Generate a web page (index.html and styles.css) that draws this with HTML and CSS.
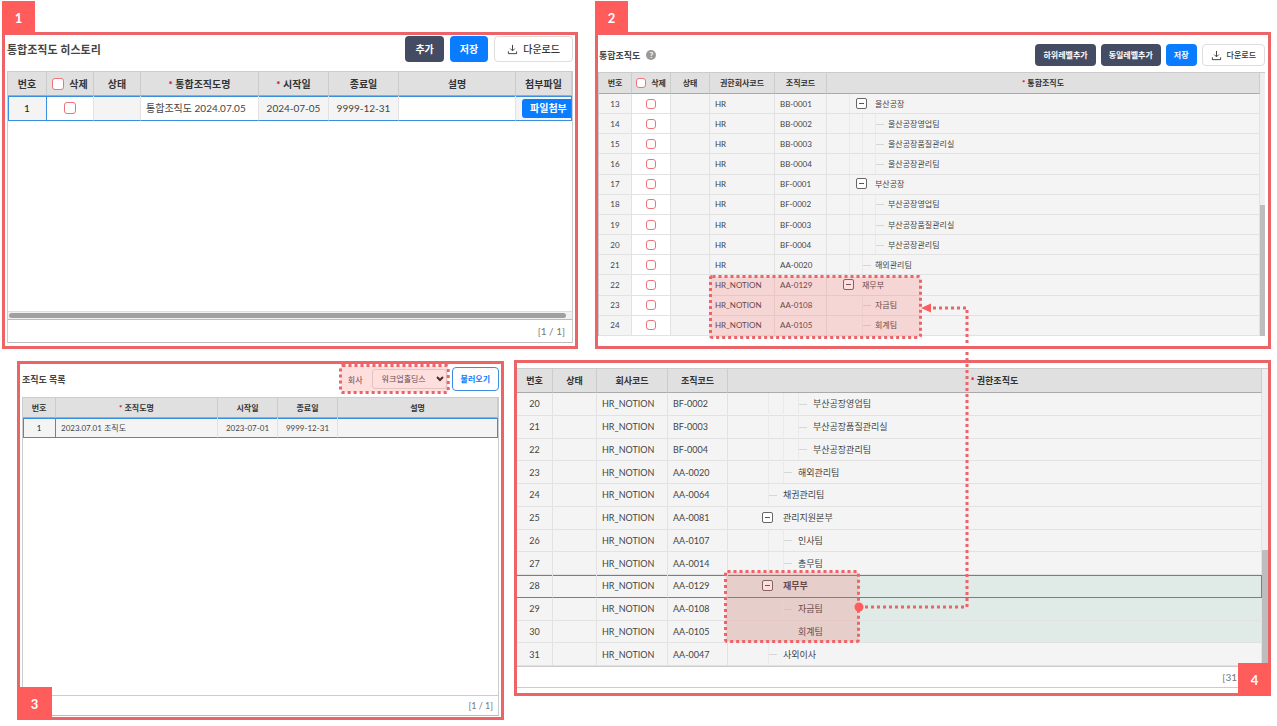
FILE: index.html
```html
<!DOCTYPE html>
<html lang="ko">
<head>
    <meta charset="UTF-8">
    <meta name="viewport" content="width=device-width, initial-scale=1.0">
    <title>통합조직도</title>
    <link rel="stylesheet" href="styles.css">
</head>
<body>

<main class="board">
    <div class="board-row top-row">

        <!-- 1. history -->
        <section class="panel panel-history">
            <span class="badge badge-top">1</span>
            <div class="toolbar">
                <h2>통합조직도 히스토리</h2>
                <div class="buttons">
                    <button type="button" class="btn dark">추가</button>
                    <button type="button" class="btn blue">저장</button>
                    <button type="button" class="btn line">
                        <svg class="icon" viewBox="0 0 12 12"><path d="M6 1v6M3.500 5L6 7.500L8.500 5M1.500 8v2.500h9V8"/></svg>
                        다운로드
                    </button>
                </div>
            </div>
            <div class="grid">
                <table>
                    <colgroup><col class="h1"><col class="h2"><col class="h2"><col class="h3"><col class="h4"><col class="h4"><col><col class="h5"></colgroup>
                    <thead>
                        <tr>
                            <th>번호</th>
                            <th><label class="check-all"><input type="checkbox">삭제</label></th>
                            <th>상태</th>
                            <th class="required">통합조직도명</th>
                            <th class="required">시작일</th>
                            <th>종료일</th>
                            <th>설명</th>
                            <th>첨부파일</th>
                        </tr>
                    </thead>
                    <tbody>
                        <tr class="selected">
                            <td class="num">1</td>
                            <td class="edit center"><input type="checkbox" aria-label="1 삭제"></td>
                            <td></td>
                            <td class="edit">통합조직도 2024.07.05</td>
                            <td class="center">2024-07-05</td>
                            <td class="center">9999-12-31</td>
                            <td class="edit"></td>
                            <td class="file"><button type="button" class="btn blue attach">파일첨부</button></td>
                        </tr>
                    </tbody>
                </table>
                <div class="empty"></div>
                <div class="scroll-x"><span></span></div>
                <div class="footer">[1 / 1]</div>
            </div>
        </section>

        <!-- 2. integrated chart -->
        <section class="panel panel-tree">
            <span class="badge badge-top">2</span>
            <div class="toolbar">
                <h2>통합조직도 <span class="help">?</span></h2>
                <div class="buttons">
                    <button type="button" class="btn dark">하위레벨추가</button>
                    <button type="button" class="btn dark">동일레벨추가</button>
                    <button type="button" class="btn blue">저장</button>
                    <button type="button" class="btn line">
                        <svg class="icon" viewBox="0 0 12 12"><path d="M6 1v6M3.500 5L6 7.500L8.500 5M1.500 8v2.500h9V8"/></svg>
                        다운로드
                    </button>
                </div>
            </div>
            <div class="grid with-scroll">
                <table>
                    <colgroup><col class="t1"><col class="t2"><col class="t2"><col class="t3"><col class="t4"><col></colgroup>
                    <thead>
                        <tr>
                            <th>번호</th>
                            <th><label class="check-all"><input type="checkbox">삭제</label></th>
                            <th>상태</th>
                            <th>권한회사코드</th>
                            <th>조직코드</th>
                            <th class="required">통합조직도</th>
                        </tr>
                    </thead>
                    <tbody>
                        <tr><td class="num">13</td><td class="edit center"><input type="checkbox" aria-label="13 삭제"></td><td></td><td>HR</td><td>BB-0001</td><td class="tree"><div class="node"><i></i><i class="toggle"></i>울산공장</div></td></tr>
                        <tr><td class="num">14</td><td class="edit center"><input type="checkbox" aria-label="14 삭제"></td><td></td><td>HR</td><td>BB-0002</td><td class="tree"><div class="node"><i></i><i></i><i class="leaf"></i>울산공장영업팀</div></td></tr>
                        <tr><td class="num">15</td><td class="edit center"><input type="checkbox" aria-label="15 삭제"></td><td></td><td>HR</td><td>BB-0003</td><td class="tree"><div class="node"><i></i><i></i><i class="leaf"></i>울산공장품질관리실</div></td></tr>
                        <tr><td class="num">16</td><td class="edit center"><input type="checkbox" aria-label="16 삭제"></td><td></td><td>HR</td><td>BB-0004</td><td class="tree"><div class="node"><i></i><i></i><i class="leaf"></i>울산공장관리팀</div></td></tr>
                        <tr><td class="num">17</td><td class="edit center"><input type="checkbox" aria-label="17 삭제"></td><td></td><td>HR</td><td>BF-0001</td><td class="tree"><div class="node"><i></i><i class="toggle"></i>부산공장</div></td></tr>
                        <tr><td class="num">18</td><td class="edit center"><input type="checkbox" aria-label="18 삭제"></td><td></td><td>HR</td><td>BF-0002</td><td class="tree"><div class="node"><i></i><i></i><i class="leaf"></i>부산공장영업팀</div></td></tr>
                        <tr><td class="num">19</td><td class="edit center"><input type="checkbox" aria-label="19 삭제"></td><td></td><td>HR</td><td>BF-0003</td><td class="tree"><div class="node"><i></i><i></i><i class="leaf"></i>부산공장품질관리실</div></td></tr>
                        <tr><td class="num">20</td><td class="edit center"><input type="checkbox" aria-label="20 삭제"></td><td></td><td>HR</td><td>BF-0004</td><td class="tree"><div class="node"><i></i><i></i><i class="leaf"></i>부산공장관리팀</div></td></tr>
                        <tr><td class="num">21</td><td class="edit center"><input type="checkbox" aria-label="21 삭제"></td><td></td><td>HR</td><td>AA-0020</td><td class="tree"><div class="node"><i></i><i class="leaf"></i>해외관리팀</div></td></tr>
                        <tr><td class="num">22</td><td class="edit center"><input type="checkbox" aria-label="22 삭제"></td><td></td><td>HR_NOTION</td><td>AA-0129</td><td class="tree"><div class="node"><i class="toggle"></i>재무부</div></td></tr>
                        <tr><td class="num">23</td><td class="edit center"><input type="checkbox" aria-label="23 삭제"></td><td></td><td>HR_NOTION</td><td>AA-0108</td><td class="tree"><div class="node"><i class="blank"></i><i class="leaf"></i>자금팀</div></td></tr>
                        <tr><td class="num">24</td><td class="edit center"><input type="checkbox" aria-label="24 삭제"></td><td></td><td>HR_NOTION</td><td>AA-0105</td><td class="tree"><div class="node"><i class="blank"></i><i class="leaf"></i>회계팀</div></td></tr>
                    </tbody>
                </table>
                <div class="scroll-y"><span></span></div>
                <svg class="callout callout-tree"><rect x="1.5" y="1.5" rx="2"/></svg>
            </div>
        </section>
    </div>

    <div class="board-row bottom-row">

        <!-- 3. chart list -->
        <section class="panel panel-list">
            <div class="toolbar">
                <h2>조직도 목록</h2>
                <div class="buttons">
                    <div class="company">
                        <label for="company">회사</label>
                        <select id="company"><option>워크업홀딩스</option></select>
                        <svg class="arrow-down" viewBox="0 0 8 6"><path d="M1 1l3 3l3-3"/></svg>
                        <svg class="callout"><rect x="1.5" y="1.5" rx="2"/></svg>
                    </div>
                    <button type="button" class="btn load">불러오기</button>
                </div>
            </div>
            <div class="grid">
                <table>
                    <colgroup><col class="l1"><col class="l2"><col class="l3"><col class="l3"><col></colgroup>
                    <thead>
                        <tr>
                            <th>번호</th>
                            <th class="required">조직도명</th>
                            <th>시작일</th>
                            <th>종료일</th>
                            <th>설명</th>
                        </tr>
                    </thead>
                    <tbody>
                        <tr class="selected">
                            <td class="num">1</td>
                            <td>2023.07.01 조직도</td>
                            <td class="center">2023-07-01</td>
                            <td class="center">9999-12-31</td>
                            <td></td>
                        </tr>
                    </tbody>
                </table>
                <div class="empty"></div>
                <div class="footer">[1 / 1]</div>
            </div>
            <span class="badge badge-left">3</span>
        </section>

        <!-- 4. authority chart -->
        <section class="panel panel-auth">
            <div class="grid with-scroll">
                <table>
                    <colgroup><col class="a1"><col class="a2"><col class="a3"><col class="a4"><col></colgroup>
                    <thead>
                        <tr>
                            <th>번호</th>
                            <th>상태</th>
                            <th>회사코드</th>
                            <th>조직코드</th>
                            <th class="required">권한조직도</th>
                        </tr>
                    </thead>
                    <tbody>
                        <tr><td class="num">20</td><td></td><td>HR_NOTION</td><td>BF-0002</td><td class="tree"><div class="node"><i></i><i></i><i class="leaf"></i>부산공장영업팀</div></td></tr>
                        <tr><td class="num">21</td><td></td><td>HR_NOTION</td><td>BF-0003</td><td class="tree"><div class="node"><i></i><i></i><i class="leaf"></i>부산공장품질관리실</div></td></tr>
                        <tr><td class="num">22</td><td></td><td>HR_NOTION</td><td>BF-0004</td><td class="tree"><div class="node"><i></i><i></i><i class="leaf"></i>부산공장관리팀</div></td></tr>
                        <tr><td class="num">23</td><td></td><td>HR_NOTION</td><td>AA-0020</td><td class="tree"><div class="node"><i></i><i class="leaf"></i>해외관리팀</div></td></tr>
                        <tr><td class="num">24</td><td></td><td>HR_NOTION</td><td>AA-0064</td><td class="tree"><div class="node"><i class="leaf"></i>채권관리팀</div></td></tr>
                        <tr><td class="num">25</td><td></td><td>HR_NOTION</td><td>AA-0081</td><td class="tree"><div class="node"><i class="toggle"></i>관리지원본부</div></td></tr>
                        <tr><td class="num">26</td><td></td><td>HR_NOTION</td><td>AA-0107</td><td class="tree"><div class="node"><i></i><i class="leaf"></i>인사팀</div></td></tr>
                        <tr><td class="num">27</td><td></td><td>HR_NOTION</td><td>AA-0014</td><td class="tree"><div class="node"><i></i><i class="leaf"></i>총무팀</div></td></tr>
                        <tr class="selected"><td class="num">28</td><td></td><td>HR_NOTION</td><td>AA-0129</td><td class="tree match"><div class="node"><i class="toggle"></i>재무부</div></td></tr>
                        <tr><td class="num">29</td><td></td><td>HR_NOTION</td><td>AA-0108</td><td class="tree match"><div class="node"><i class="blank"></i><i class="leaf"></i>자금팀</div></td></tr>
                        <tr><td class="num">30</td><td></td><td>HR_NOTION</td><td>AA-0105</td><td class="tree match"><div class="node"><i class="blank"></i><i class="blank"></i>회계팀</div></td></tr>
                        <tr><td class="num">31</td><td></td><td>HR_NOTION</td><td>AA-0047</td><td class="tree"><div class="node"><i class="leaf"></i>사외이사</div></td></tr>
                    </tbody>
                </table>
                <div class="scroll-y"><span></span></div>
                <svg class="callout callout-auth"><rect x="1.5" y="1.5" rx="2"/></svg>
            </div>
            <div class="footer">[31</div>
            <span class="badge badge-right">4</span>
        </section>
    </div>

    <!-- link from panel 4 to panel 2 -->
    <svg class="connector" viewBox="0 0 120 312">
        <path class="dots" d="M14 305H116V6H80"/>
        <circle cx="8" cy="305" r="4.500"/>
        <path d="M70 6l10-4.500v9z"/>
    </svg>
</main>

</body>
</html>
```

FILE: styles.css
```css
*, *::before, *::after {
    box-sizing: border-box;
}
body {
    margin: 0;
    background: #fff;
    color: #444;
    font-family: Lato, "Noto Sans CJK KR", sans-serif;
}
.board {
    position: relative;
    padding: 32px 6px 6px 2px;
}
.board-row {
    display: grid;
    align-items: start;
}
.top-row {
    grid-template-columns: 576fr 676fr;
    gap: 17px;
}
.bottom-row {
    grid-template-columns: 487fr 757fr;
    gap: 10px;
    padding-left: 15px;
    margin-top: 11px;
}

/* panels */
.panel {
    position: relative;
    min-width: 0;
    border: 3px solid #ec6368;
    background: #fff;
}
.panel-history {
    padding: 1px 2px 3px;
    font-size: 10px;
}
.panel-tree {
    padding: 1px 3px 10px 0;
    font-size: 8px;
}
.panel-list {
    margin-top: 1px;
    padding: 0 2px 1px;
    font-size: 8px;
}
.panel-auth {
    padding: 5px 0;
    font-size: 9px;
}
.badge {
    position: absolute;
    z-index: 3;
    display: flex;
    align-items: center;
    justify-content: center;
    width: 33px;
    height: 33px;
    background: #ff5c5c;
    color: #fff;
    font-size: 13px;
    font-weight: bold;
}
.badge-top {
    left: -3px;
    top: -34px;
}
.badge-left {
    left: -3px;
    bottom: -3px;
    width: 35px;
}
.badge-right {
    right: -3px;
    bottom: -3px;
}

/* toolbar */
.toolbar {
    display: flex;
    align-items: center;
    justify-content: space-between;
    height: 35px;
}
.panel-history .toolbar {
    align-items: flex-start;
}
.panel-tree .toolbar {
    height: 36px;
    padding: 2px 0 0 1px;
}
.panel-list .toolbar {
    height: 33px;
    padding-bottom: 3px;
}
h2 {
    display: flex;
    align-items: center;
    gap: 6px;
    margin: 0;
    color: #444;
    font-size: 9px;
    font-weight: bold;
}
.panel-history h2 {
    height: 26px;
    font-size: 11px;
}
.help {
    width: 10px;
    height: 10px;
    border-radius: 50%;
    background: #999;
    color: #fff;
    font-size: 8px;
    font-weight: bold;
    line-height: 10px;
    text-align: center;
}
.buttons {
    display: flex;
    align-items: center;
    gap: 6px;
}
.panel-tree .buttons {
    gap: 5px;
}
.panel-list .buttons {
    gap: 2px;
}
.btn {
    display: flex;
    align-items: center;
    justify-content: center;
    gap: 5px;
    height: 26px;
    padding: 0 9px;
    border: 1px solid transparent;
    border-radius: 4px;
    color: #fff;
    font-family: inherit;
    font-size: inherit;
    font-weight: bold;
    line-height: 1;
    white-space: nowrap;
    cursor: pointer;
}
.panel-tree .btn {
    height: 22px;
    padding: 0 7px;
}
.btn.dark {
    background: #444c63;
}
.btn.blue {
    background: #0a7cff;
}
.btn.line {
    padding: 0 12px;
    border-color: #ddd;
    background: #fff;
    color: #333;
    font-weight: 500;
}
.panel-tree .btn.line {
    padding: 0 8px;
}
.btn.load {
    height: 24px;
    padding: 0 8px;
    border-color: #3c8ee0;
    background: #fff;
    color: #0a7cff;
}
.icon {
    width: 11px;
    height: 11px;
    fill: none;
    stroke: #333;
    stroke-width: 1;
}
.company {
    position: relative;
    display: flex;
    align-items: center;
    gap: 9px;
    height: 30px;
    padding: 0 3px 0 9px;
}
.company select {
    width: 75px;
    height: 20px;
    padding: 0 0 0 9px;
    border: 1px solid #ddd;
    border-radius: 3px;
    background: #fff;
    color: #444;
    font-family: inherit;
    font-size: 8px;
    appearance: none;
}
.arrow-down {
    position: absolute;
    right: 6px;
    top: 12px;
    width: 8px;
    height: 6px;
    fill: none;
    stroke: #222;
    stroke-width: 2;
}

/* tables */
.grid {
    position: relative;
    border: 1px solid #ccc;
    border-bottom-color: #bbb;
}
.with-scroll {
    display: flex;
    border-width: 1px 0 0;
}
.panel-tree .grid {
    border-left-width: 1px;
}
table {
    width: 100%;
    table-layout: fixed;
    border-collapse: separate;
    border-spacing: 0;
}
.panel-tree table {
    height: 263px;
}
.panel-auth table {
    height: 297px;
}
th, td {
    height: 20px;
    padding: 0;
    border-right: 1px solid #e2e2e2;
    border-bottom: 1px solid #e2e2e2;
    overflow: hidden;
    line-height: 1;
    white-space: nowrap;
}
th {
    border-right-color: #ccc;
    border-bottom-color: #aaa;
    background: #e0e0e0;
    color: #333;
    font-weight: bold;
}
.panel-history th,
.panel-auth th {
    height: 24px;
}
.panel-tree th {
    height: 21px;
}
.panel-history td {
    height: 25px;
}
td {
    padding-left: 5px;
    background: #f4f4f4;
}
td.edit {
    background: #fff;
}
td.num, td.center {
    padding-left: 0;
    text-align: center;
}
td.file {
    padding-left: 6px;
}
.required::before {
    content: "* ";
    color: #d0021b;
}
.selected td {
    border-bottom-color: #3a8ee0;
    box-shadow: inset 0 1px #3a8ee0;
}
.selected td.num {
    border-right-color: #3a8ee0;
    box-shadow: inset 1px 1px #3a8ee0;
    color: #222;
}
.panel-auth .selected td.num {
    border-right-color: #e2e2e2;
    box-shadow: inset 0 1px #3a8ee0;
    color: inherit;
}
.selected td:last-child {
    border-right-color: #3a8ee0;
}
.btn.attach {
    height: 19px;
    padding: 0 7px;
    border-radius: 3px;
}

/* column widths */
.h1 { width: 39px; }
.h2 { width: 47px; }
.h3 { width: 118px; }
.h4 { width: 70px; }
.h5 { width: 56px; }
.t1 { width: 33px; }
.t2 { width: 39px; }
.t3 { width: 65px; }
.t4 { width: 52px; }
.l1 { width: 33px; }
.l2 { width: 162px; }
.l3 { width: 60px; }
.a1 { width: 36px; }
.a2 { width: 44px; }
.a3 { width: 71px; }
.a4 { width: 60px; }

input[type="checkbox"] {
    width: 12px;
    height: 12px;
    margin: 0;
    border: 1px solid #ee7478;
    border-radius: 3px;
    background: #fff;
    vertical-align: middle;
    appearance: none;
}
.panel-tree input[type="checkbox"] {
    width: 10px;
    height: 10px;
}
.check-all {
    display: flex;
    align-items: center;
    justify-content: center;
    gap: 5px;
}

/* tree column */
td.tree {
    padding-left: 22px;
}
.panel-auth td.tree {
    padding-left: 40px;
}
td.match {
    background: #e0ebe8;
}
.selected td.match {
    font-weight: bold;
}
.node {
    display: flex;
    align-items: center;
    height: 19px;
}
.panel-auth .node {
    height: 21px;
}
.node i {
    position: relative;
    width: 13px;
    height: 100%;
    border-left: 1px solid #eaeaea;
}
.panel-auth .node i {
    width: 15px;
}
.node .toggle,
.node .blank {
    border-left-color: transparent;
}
.leaf::after {
    content: "";
    position: absolute;
    left: 0;
    top: 50%;
    width: 8px;
    border-top: 1px solid #d6d6d6;
}
.toggle::before {
    content: "";
    position: absolute;
    left: -7px;
    top: 50%;
    width: 11px;
    height: 11px;
    margin-top: -6px;
    border: 1px solid #666;
    border-radius: 2px;
    background: #fff;
}
.toggle::after {
    content: "";
    position: absolute;
    left: -4px;
    top: 50%;
    width: 5px;
    margin-top: -1px;
    border-top: 1px solid #555;
}

/* scroll bars and footers */
.scroll-y {
    display: flex;
    flex: none;
    align-items: flex-end;
    width: 5px;
    background: #eee;
}
.scroll-y span {
    width: 100%;
    height: 50%;
    background: #bdbdbd;
}
.panel-auth .scroll-y {
    width: 6px;
}
.panel-auth .scroll-y span {
    height: 39%;
}
.scroll-x {
    height: 9px;
    padding: 1px 6px 1px 1px;
    border-top: 1px solid #ddd;
    border-bottom: 1px solid #bbb;
    background: #f1f1f1;
}
.scroll-x span {
    display: block;
    height: 5px;
    border-radius: 3px;
    background: #a0a0a0;
}
.panel-history .empty {
    height: 190px;
}
.panel-list .empty {
    height: 258px;
    border-bottom: 1px solid #ccc;
}
.footer {
    height: 22px;
    padding-right: 7px;
    color: #777;
    line-height: 22px;
    text-align: right;
}
.panel-list .footer {
    height: 19px;
    padding-right: 5px;
    font-size: 9px;
    line-height: 19px;
}
.panel-auth .footer {
    padding-right: 31px;
    border-top: 1px solid #ccc;
    border-bottom: 1px solid #ccc;
    font-size: 10px;
    line-height: 20px;
}

/* dotted highlights */
.callout {
    position: absolute;
    left: 0;
    top: 0;
    z-index: 2;
    width: 100%;
    height: 100%;
    pointer-events: none;
}
.callout rect {
    width: calc(100% - 3px);
    height: calc(100% - 3px);
    fill: rgba(255, 92, 92, 0.2);
    stroke: #ec6368;
    stroke-width: 3;
    stroke-dasharray: 3 3;
}
.callout-tree {
    left: 110px;
    top: 202px;
    width: 213px;
    height: 64px;
}
.callout-auth {
    left: 207px;
    top: 201px;
    width: 136px;
    height: 73px;
}
.connector {
    position: absolute;
    z-index: 3;
    right: 306px;
    top: 302px;
    width: 120px;
    height: 312px;
    fill: #ff5c5c;
    pointer-events: none;
}
.connector .dots {
    fill: none;
    stroke: #ec6368;
    stroke-width: 3;
    stroke-dasharray: 3 3;
}
```
